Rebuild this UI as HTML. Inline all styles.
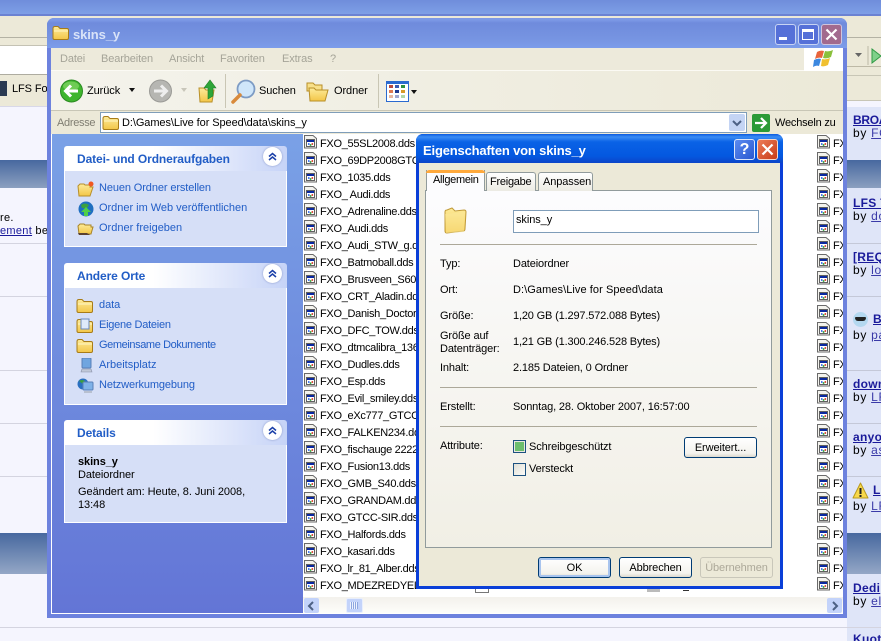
<!DOCTYPE html>
<html><head><meta charset="utf-8"><style>
html,body{margin:0;padding:0}
#p{position:relative;width:881px;height:641px;overflow:hidden;background:#f5f5fe;font:11px/13px "Liberation Sans",sans-serif;color:#000;letter-spacing:-.08px}
.b,.t,svg.i{position:absolute}
.t{white-space:nowrap}
.l{color:#215dc6;letter-spacing:-.05px}
.h{color:#215dc6;font-weight:bold;font-size:12px;letter-spacing:-.1px}
.m{color:#a5a498;letter-spacing:-.12px}
.u{color:#1a1a9a;text-decoration:underline;font-weight:bold;font-size:12px;letter-spacing:.3px}
.y{font-size:12px;letter-spacing:.7px}
.v{color:#3a3aa8;text-decoration:underline}
.d{letter-spacing:-.13px}
.btn{position:absolute;box-sizing:border-box;border:1px solid #003c74;border-radius:3px;background:linear-gradient(#fff,#f4f3ee 80%,#dcd8ce);text-align:center;line-height:20px;letter-spacing:-.1px}
.hd{position:absolute;left:64px;width:223px;height:25px;border-radius:3px 3px 0 0;background:linear-gradient(90deg,#fff 40%,#c6d3f7)}
.bd{position:absolute;left:64px;width:223px;box-sizing:border-box;background:#d6dff7;border:1px solid #fff;border-top:0}
.c{position:absolute;width:19px;height:19px;border-radius:50%;background:#fff;box-shadow:0 0 2px #8796c8}
.col{position:absolute;top:136px;line-height:17px;overflow:hidden;white-space:pre;letter-spacing:-.3px}
</style></head><body><div id="p">
<svg width="0" height="0" style="position:absolute"><defs>
<linearGradient id="fg" x1="0" y1="0" x2="0" y2="1"><stop offset="0" stop-color="#fdeb9a"/><stop offset="1" stop-color="#f3c648"/></linearGradient>
<g id="f"><path d="M.5.5h8.500l3.500 3v9.500H.5z" fill="#f4f3ee" stroke="#6a6a6a"/><rect x="2.500" y="4.500" width="8" height="7" fill="#fff" stroke="#3a3a3a" stroke-width=".8"/><rect x="3" y="5" width="7" height="2" fill="#0a28a0"/><rect x="4" y="8" width="1.500" height="2" fill="#4a7af0"/><rect x="5.800" y="9" width="1.500" height="2" fill="#48b050"/><rect x="7.600" y="8" width="1.500" height="2" fill="#e05040"/></g>
<g id="fo"><path d="M1 3.500Q1 1.500 3 1.500h3l2 2h7q1.500 0 1.500 1.500v8q0 1.500-1.500 1.500H2.500Q1 14.500 1 13z" fill="url(#fg)" stroke="#a87c18"/><path d="M2 5.500h14v1H2z" fill="#fff6c4"/></g>
<g id="ch"><path d="M6 9.500l3.500-3 3.500 3M6 13l3.500-3 3.500 3" fill="none" stroke="#1a3fa8" stroke-width="1.500"/></g>
<g id="col"><use href="#f" y="0"/><use href="#f" y="17"/><use href="#f" y="34"/><use href="#f" y="51"/><use href="#f" y="68"/><use href="#f" y="85"/><use href="#f" y="102"/><use href="#f" y="119"/><use href="#f" y="136"/><use href="#f" y="153"/><use href="#f" y="170"/><use href="#f" y="187"/><use href="#f" y="204"/><use href="#f" y="221"/><use href="#f" y="238"/><use href="#f" y="255"/><use href="#f" y="272"/><use href="#f" y="289"/><use href="#f" y="306"/><use href="#f" y="323"/><use href="#f" y="340"/><use href="#f" y="357"/><use href="#f" y="374"/><use href="#f" y="391"/><use href="#f" y="408"/><use href="#f" y="425"/><use href="#f" y="442"/></g>
</defs></svg>

<!-- background page -->
<div class="b" style="left:0;top:0;width:881px;height:14px;background:linear-gradient(#6f8ddb,#7e9fe6)"></div>
<div class="b" style="left:0;top:14px;width:881px;height:2px;background:#6b82d2"></div>
<div class="b" style="left:0;top:16px;width:881px;height:91px;background:#ece9d8"></div>
<div class="b" style="left:0;top:37px;width:881px;height:1px;background:#b4b2a4"></div>
<div class="b" style="left:0;top:45px;width:47px;height:29px;background:#fff;border-top:1px solid #c4c2b4"></div>
<div class="b" style="left:0;top:74px;width:47px;height:1px;background:#aeaca0"></div>
<div class="b" style="left:847px;top:66px;width:34px;height:1px;background:#bdb9a6"></div>
<div class="b" style="left:847px;top:75px;width:34px;height:1px;background:#c8c6b6"></div>
<div class="b" style="left:847px;top:100px;width:34px;height:7px;background:#f5f5fe;border-top:1px solid #c8c6b6;box-sizing:border-box"></div>
<div class="b" style="left:0;top:106px;width:47px;height:1px;background:#d8d8e8"></div>
<div class="b" style="left:0;top:81px;width:7px;height:15px;background:#2a3a52"></div>
<div class="t" style="left:12px;top:83px">LFS Forum</div>
<div class="b" style="left:847px;top:107px;width:34px;height:534px;background:#dfe5f8"></div>
<div class="b" style="left:0;top:160px;width:881px;height:28px;background:linear-gradient(#47689f,#8ca0c0)"></div>
<div class="b" style="left:0;top:533px;width:881px;height:41px;background:linear-gradient(#47689f,#94a7c6)"></div>
<div class="b" style="left:0;top:243px;width:47px;height:1px;background:#d4d4e0"></div>
<div class="b" style="left:0;top:296px;width:47px;height:1px;background:#d4d4e0"></div>
<div class="b" style="left:0;top:370px;width:47px;height:1px;background:#d4d4e0"></div>
<div class="b" style="left:0;top:423px;width:47px;height:1px;background:#d4d4e0"></div>
<div class="b" style="left:0;top:476px;width:47px;height:1px;background:#d4d4e0"></div>
<div class="b" style="left:0;top:627px;width:881px;height:1px;background:#d4d4e0"></div>
<div class="t" style="left:0;top:212px;letter-spacing:.3px">re.</div>
<div class="t" style="left:0;top:225px;letter-spacing:.3px"><span style="color:#1a1a9a;text-decoration:underline">ement</span> be</div>
<svg class="i" style="left:846px;top:46px" width="35" height="19"><path d="M9 7h7l-3.500 4z" fill="#666"/><path d="M22 0v19" stroke="#bdb9a6"/><path d="M26 3l9 7-9 7z" fill="#7fd08a" stroke="#2f9a45"/></svg>
<div class="t u" style="left:853px;top:114px;letter-spacing:-.3px">BROADCAST</div><div class="t y" style="left:853px;top:127px">by <span class="v">FOX</span></div>
<div class="t u" style="left:853px;top:197px">LFS TV</div><div class="t y" style="left:853px;top:210px">by <span class="v">don</span></div>
<div class="b" style="left:847px;top:243px;width:34px;height:1px;background:#c4c8d8"></div>
<div class="t u" style="left:853px;top:251px">[REQ]</div><div class="t y" style="left:853px;top:264px">by <span class="v">lon</span></div>
<div class="b" style="left:847px;top:296px;width:34px;height:1px;background:#c4c8d8"></div>
<div class="b" style="left:853px;top:312px;width:15px;height:15px;border-radius:50%;background:#b4d8f0"></div><div class="b" style="left:855px;top:317px;width:11px;height:4px;background:#222;border-radius:1px 1px 3px 3px"></div>
<div class="t u" style="left:873px;top:313px">B</div><div class="t y" style="left:853px;top:329px">by <span class="v">pa</span></div>
<div class="b" style="left:847px;top:370px;width:34px;height:1px;background:#c4c8d8"></div>
<div class="t u" style="left:853px;top:378px">down</div><div class="t y" style="left:853px;top:391px">by <span class="v">LF</span></div>
<div class="b" style="left:847px;top:423px;width:34px;height:1px;background:#c4c8d8"></div>
<div class="t u" style="left:853px;top:431px">anyo</div><div class="t y" style="left:853px;top:444px">by <span class="v">as</span></div>
<div class="b" style="left:847px;top:476px;width:34px;height:1px;background:#c4c8d8"></div>
<svg class="i" style="left:852px;top:482px" width="17" height="17"><path d="M8.500 1L16 16H1z" fill="#f8d84a" stroke="#b89a20" stroke-linejoin="round"/><path d="M8.500 6v6M8.500 13v2" stroke="#222" stroke-width="2"/></svg>
<div class="t u" style="left:873px;top:484px">L</div><div class="t y" style="left:853px;top:500px">by <span class="v">LF</span></div>
<div class="t u" style="left:853px;top:582px">Dedi</div><div class="t y" style="left:853px;top:595px">by <span class="v">el</span></div>
<div class="t u" style="left:853px;top:633px">Kuot</div>

<!-- main window -->
<div class="b" style="left:47px;top:18px;width:800px;height:600px;background:#6d82de;border-radius:7px 7px 0 0"></div>
<div class="b" style="left:47px;top:18px;width:800px;height:30px;border-radius:7px 7px 0 0;background:linear-gradient(#7d98e4 0,#7c99e6 2px,#6f8bdc 5px,#7795e2 22px,#7c9cea 30px)"></div>
<svg class="i" style="left:52px;top:25px" width="18" height="16"><use href="#fo"/></svg>
<div class="t" style="left:73px;top:27px;color:#d9e3f8;font-weight:bold;font-size:13px;line-height:16px;letter-spacing:-.1px">skins_y</div>
<div class="b" style="left:775px;top:24px;width:21px;height:21px;box-sizing:border-box;border:1px solid #c8d4f4;border-radius:3px;background:#5570d8"></div>
<div class="b" style="left:779px;top:37px;width:8px;height:3px;background:#fff"></div>
<div class="b" style="left:798px;top:24px;width:21px;height:21px;box-sizing:border-box;border:1px solid #c8d4f4;border-radius:3px;background:#5570d8"></div>
<div class="b" style="left:802px;top:29px;width:12px;height:11px;box-sizing:border-box;border:1px solid #fff;border-top-width:3px"></div>
<div class="b" style="left:821px;top:24px;width:21px;height:21px;box-sizing:border-box;border:1px solid #d0c4dc;border-radius:3px;background:#a26a8e"></div>
<svg class="i" style="left:821px;top:24px" width="21" height="21"><path d="M5.500 5.500l10 10M15.500 5.500l-10 10" stroke="#fff" stroke-width="2.200"/></svg>

<div class="b" style="left:51px;top:48px;width:792px;height:565px;background:#fff"></div>
<!-- menu -->
<div class="b" style="left:51px;top:48px;width:754px;height:22px;background:#edeadb"></div>
<div class="b" style="left:51px;top:70px;width:792px;height:1px;background:#fbfaf4"></div>
<div class="b" style="left:804px;top:48px;width:39px;height:23px;background:#fff"></div>
<svg class="i" style="left:813px;top:49px" width="22" height="20"><path d="M4 3q3-2 7-1l-2 7q-4-1-7 1z" fill="#e8643c"/><path d="M12 2q4 1 8-1l-2 7q-4 2-8 1z" fill="#8ac03c"/><path d="M1 11q4-2 7-1l-2 7q-3-1-6 1z" fill="#3c88e0"/><path d="M9 10q4 1 8-1l-2 7q-4 2-7 1z" fill="#f0c030"/></svg>
<div class="t m" style="left:60px;top:53px">Datei</div>
<div class="t m" style="left:101px;top:53px">Bearbeiten</div>
<div class="t m" style="left:169px;top:53px">Ansicht</div>
<div class="t m" style="left:220px;top:53px">Favoriten</div>
<div class="t m" style="left:282px;top:53px">Extras</div>
<div class="t m" style="left:330px;top:53px">?</div>
<!-- toolbar -->
<div class="b" style="left:51px;top:71px;width:792px;height:39px;background:linear-gradient(90deg,#f4f3ec,#ece9d8)"></div>
<div class="b" style="left:51px;top:110px;width:792px;height:1px;background:#c8c6b6"></div>
<div class="b" style="left:225px;top:74px;width:1px;height:34px;background:#c9c6b4"></div>
<div class="b" style="left:378px;top:74px;width:1px;height:34px;background:#c9c6b4"></div>
<svg class="i" style="left:60px;top:79px" width="24" height="24"><circle cx="11.500" cy="12" r="11" fill="#3fb52e" stroke="#2b8a22"/><ellipse cx="11" cy="7" rx="8" ry="4.500" fill="#8fdc6f" opacity=".6"/><path d="M18 12H6M11 6.500L5.500 12l5.500 5.500" fill="none" stroke="#fff" stroke-width="3"/></svg>
<div class="t" style="left:87px;top:85px">Zurück</div>
<svg class="i" style="left:128px;top:88px" width="8" height="5"><path d="M1 0h6L4 4z" fill="#111"/></svg>
<svg class="i" style="left:149px;top:79px" width="24" height="24"><circle cx="11.500" cy="12" r="11" fill="#b6b6b2" stroke="#9a9a96"/><path d="M5 12h12M12 6.500l5.500 5.500-5.500 5.500" fill="none" stroke="#eee" stroke-width="3"/></svg>
<svg class="i" style="left:180px;top:88px" width="8" height="5"><path d="M1 0h6L4 4z" fill="#c8c6ba"/></svg>
<svg class="i" style="left:198px;top:79px" width="20" height="24"><path d="M1 9h5l2 2h8l-2 12H2z" fill="url(#fg)" stroke="#b88f28"/><path d="M10 20V9H6l6-8 6 8h-3v8z" fill="#2ea638" stroke="#1f7d28" stroke-width=".6"/></svg>
<svg class="i" style="left:231px;top:79px" width="26" height="25"><circle cx="15" cy="10" r="8.500" fill="#cfe6fa" stroke="#7d9bc4" stroke-width="1.800"/><path d="M9 16l-7 7" stroke="#d88a3c" stroke-width="3.500" stroke-linecap="round"/></svg>
<div class="t" style="left:259px;top:85px">Suchen</div>
<svg class="i" style="left:306px;top:80px" width="24" height="22"><path d="M1 3h6l2 2h7v6H1z" fill="#f8e08a" stroke="#b88f28"/><path d="M3 8h5l2 2h12l-3 11H4z" fill="url(#fg)" stroke="#b88f28"/></svg>
<div class="t" style="left:334px;top:85px">Ordner</div>
<div class="b" style="left:386px;top:81px;width:23px;height:21px;box-sizing:border-box;border:1px solid #2a6ad0;border-top-width:3px;background:#fff"></div>
<svg class="i" style="left:389px;top:85px" width="16" height="14"><rect x="0" y="0" width="4" height="3" fill="#b84a40"/><rect x="6" y="0" width="4" height="3" fill="#3a5ab0"/><rect x="12" y="0" width="4" height="3" fill="#2e9040"/><rect x="0" y="5" width="4" height="3" fill="#e07a50"/><rect x="6" y="5" width="4" height="3" fill="#1f3a90"/><rect x="12" y="5" width="4" height="3" fill="#d89a28"/><rect x="0" y="10" width="4" height="3" fill="#e8b8a0"/><rect x="6" y="10" width="4" height="3" fill="#a0a8d0"/><rect x="12" y="10" width="4" height="3" fill="#b0d8a8"/></svg>
<svg class="i" style="left:411px;top:90px" width="7" height="5"><path d="M0 0h6L3 4z" fill="#111"/></svg>
<!-- address -->
<div class="b" style="left:51px;top:111px;width:792px;height:23px;background:#ece9d8"></div>
<div class="t" style="left:57px;top:117px;color:#807e72;letter-spacing:-.3px">Adresse</div>
<div class="b" style="left:100px;top:112px;width:647px;height:21px;box-sizing:border-box;background:#fff;border:1px solid #7f9db9"></div>
<svg class="i" style="left:102px;top:115px" width="18" height="16"><use href="#fo"/></svg>
<div class="t" style="left:122px;top:117px">D:\Games\Live for Speed\data\skins_y</div>
<div class="b" style="left:729px;top:114px;width:16px;height:17px;background:#c4d4f4;border-radius:2px"></div>
<svg class="i" style="left:732px;top:120px" width="10" height="7"><path d="M1 1l4 4 4-4" fill="none" stroke="#4d6185" stroke-width="2"/></svg>
<svg class="i" style="left:752px;top:114px" width="19" height="18"><rect width="18" height="18" rx="2" fill="#2b9a36"/><path d="M3 9h11M9 4l5 5-5 5" fill="none" stroke="#fff" stroke-width="2.200"/></svg>
<div class="t" style="left:775px;top:117px;letter-spacing:-.2px">Wechseln zu</div>
<!-- sidebar -->
<div class="b" style="left:52px;top:134px;width:251px;height:479px;background:linear-gradient(#7aa1e6,#6375d6)"></div>
<div class="hd" style="top:146px"></div><div class="t h" style="left:77px;top:153px">Datei- und Ordneraufgaben</div>
<div class="c" style="left:263px;top:147px"></div><svg class="i" style="left:263px;top:147px" width="19" height="19"><use href="#ch"/></svg>
<div class="bd" style="top:171px;height:76px"></div>
<svg class="i" style="left:77px;top:181px" width="17" height="16"><path d="M1 5l2-2h4l1 1h6l-1 2 3 0-3 9H2z" fill="url(#fg)" stroke="#b88f28"/><circle cx="14" cy="3" r="2.500" fill="#f05820"/></svg>
<div class="t l" style="left:99px;top:182px;letter-spacing:-.11px">Neuen Ordner erstellen</div>
<svg class="i" style="left:78px;top:201px" width="16" height="16"><circle cx="8" cy="8" r="7.500" fill="#1f6fc0"/><path d="M3 4q4-3 8 0l-2 3H4z" fill="#3ca040"/><path d="M8 6l5 5h-3v4H6v-4H3z" fill="#4fd048"/></svg>
<div class="t l" style="left:99px;top:202px;letter-spacing:-.02px">Ordner im Web veröffentlichen</div>
<svg class="i" style="left:77px;top:221px" width="17" height="16"><path d="M1 5l2-2h4l1 1h6v2l2 0-2 7H2z" fill="url(#fg)" stroke="#a88428"/><path d="M1 12h9l3 2H2z" fill="#5a4030"/></svg>
<div class="t l" style="left:99px;top:222px;letter-spacing:0">Ordner freigeben</div>

<div class="hd" style="top:263px"></div><div class="t h" style="left:77px;top:270px">Andere Orte</div>
<div class="c" style="left:263px;top:264px"></div><svg class="i" style="left:263px;top:264px" width="19" height="19"><use href="#ch"/></svg>
<div class="bd" style="top:288px;height:117px"></div>
<svg class="i" style="left:76px;top:298px" width="18" height="16"><use href="#fo"/></svg>
<div class="t l" style="left:99px;top:299px">data</div>
<svg class="i" style="left:76px;top:318px" width="18" height="16"><use href="#fo"/><rect x="5" y="1" width="8" height="10" fill="#dfeafa" stroke="#6a88bc"/></svg>
<div class="t l" style="left:99px;top:319px;letter-spacing:-.25px">Eigene Dateien</div>
<svg class="i" style="left:76px;top:338px" width="18" height="16"><use href="#fo"/></svg>
<div class="t l" style="left:99px;top:339px;letter-spacing:-.4px">Gemeinsame Dokumente</div>
<svg class="i" style="left:79px;top:358px" width="15" height="16"><rect x="3" y="0" width="9" height="10" rx="1" fill="#6fa5e0" stroke="#5a80b8"/><path d="M3 11h9l1 3H2z" fill="#c0c8d8" stroke="#8890a8" stroke-width=".6"/></svg>
<div class="t l" style="left:99px;top:359px;letter-spacing:0">Arbeitsplatz</div>
<svg class="i" style="left:77px;top:378px" width="17" height="16"><circle cx="6" cy="6" r="5.500" fill="#2a70c0"/><path d="M2 3q3-2 6 0L6 6z" fill="#3ca040"/><rect x="6" y="4" width="10" height="8" rx="1" fill="#7fb2e8" stroke="#5a80b8"/><rect x="7" y="13" width="8" height="2" fill="#b8c0d0"/></svg>
<div class="t l" style="left:99px;top:379px;letter-spacing:-.12px">Netzwerkumgebung</div>

<div class="hd" style="top:420px"></div><div class="t h" style="left:77px;top:427px">Details</div>
<div class="c" style="left:263px;top:421px"></div><svg class="i" style="left:263px;top:421px" width="19" height="19"><use href="#ch"/></svg>
<div class="bd" style="top:445px;height:78px"></div>
<div class="t" style="left:78px;top:456px;font-weight:bold">skins_y</div>
<div class="t" style="left:78px;top:469px">Dateiordner</div>
<div class="t" style="left:78px;top:486px;letter-spacing:-.05px">Geändert am: Heute, 8. Juni 2008,</div>
<div class="t" style="left:78px;top:499px">13:48</div>

<!-- file list -->
<svg class="i" style="left:304px;top:135px" width="540" height="462"><use href="#col"/><use href="#col" x="513"/></svg>
<div class="col" style="left:320px;width:97px">FXO_55SL2008.dds
FXO_69DP2008GTC
FXO_1035.dds
FXO_ Audi.dds
FXO_Adrenaline.dds
FXO_Audi.dds
FXO_Audi_STW_g.dds
FXO_Batmoball.dds
FXO_Brusveen_S60
FXO_CRT_Aladin.dds
FXO_Danish_Doctor
FXO_DFC_TOW.dds
FXO_dtmcalibra_136
FXO_Dudles.dds
FXO_Esp.dds
FXO_Evil_smiley.dds
FXO_eXc777_GTCC
FXO_FALKEN234.dds
FXO_fischauge 2222
FXO_Fusion13.dds
FXO_GMB_S40.dds
FXO_GRANDAM.dds
FXO_GTCC-SIR.dds
FXO_Halfords.dds
FXO_kasari.dds
FXO_lr_81_Alber.dds
FXO_MDEZREDYELL</div>
<div class="col" style="left:833px;width:10px">FXO
FXO
FXO
FXO
FXO
FXO
FXO
FXO
FXO
FXO
FXO
FXO
FXO
FXO
FXO
FXO
FXO
FXO
FXO
FXO
FXO
FXO
FXO
FXO
FXO
FXO
FXO</div>
<div class="b" style="left:475px;top:586px;width:14px;height:7px;background:#fff;border:1px solid #777;border-top:0;box-sizing:border-box"></div>
<div class="b" style="left:647px;top:589px;width:13px;height:3px;background:#bbb"></div>
<div class="b" style="left:683px;top:590px;width:6px;height:1px;background:#333"></div>
<!-- scrollbar -->
<div class="b" style="left:303px;top:597px;width:540px;height:17px;background:linear-gradient(#f3f1ec,#fefefb)"></div>
<div class="b" style="left:304px;top:598px;width:15px;height:15px;background:#c3d3fa;border-radius:2px"></div>
<svg class="i" style="left:307px;top:601px" width="9" height="10"><path d="M6 1L2 5l4 4" fill="none" stroke="#4d6185" stroke-width="2"/></svg>
<div class="b" style="left:346px;top:598px;width:17px;height:15px;background:#c3d3fa;border-radius:2px;box-sizing:border-box;border:1px solid #e8eefc"></div>
<div class="b" style="left:350px;top:602px;width:8px;height:7px;background:repeating-linear-gradient(90deg,#eef3fe 0 1px,#8ea6e0 1px 2px)"></div>
<div class="b" style="left:827px;top:598px;width:15px;height:15px;background:#c3d3fa;border-radius:2px"></div>
<svg class="i" style="left:830px;top:601px" width="9" height="10"><path d="M3 1l4 4-4 4" fill="none" stroke="#4d6185" stroke-width="2"/></svg>
<div class="b" style="left:51px;top:613px;width:792px;height:1px;background:#fff"></div>

<!-- dialog -->
<div class="b" style="left:416px;top:134px;width:367px;height:455px;background:#0a3fd8;border-radius:7px 7px 0 0"></div>
<div class="b" style="left:416px;top:134px;width:367px;height:29px;border-radius:7px 7px 0 0;background:linear-gradient(#0a5ae0 0,#3a8cf4 3px,#0a62e6 8px,#0458e0 22px,#0b44c8 29px)"></div>
<div class="t" style="left:423px;top:143px;color:#fff;font-weight:bold;font-size:13px;line-height:16px;letter-spacing:-.17px">Eigenschaften von skins_y</div>
<div class="b" style="left:734px;top:139px;width:21px;height:21px;box-sizing:border-box;border:1px solid #dce6fb;border-radius:3px;background:linear-gradient(135deg,#5b8bf0,#2a58d0)"></div>
<div class="t" style="left:734px;top:140px;width:21px;text-align:center;color:#fff;font-weight:bold;font-size:16px;line-height:19px">?</div>
<div class="b" style="left:757px;top:139px;width:21px;height:21px;box-sizing:border-box;border:1px solid #f4d8cc;border-radius:3px;background:linear-gradient(135deg,#ec7c58,#c83c18)"></div>
<svg class="i" style="left:757px;top:139px" width="21" height="21"><path d="M5.500 5.500l10 10M15.500 5.500l-10 10" stroke="#fff" stroke-width="2.200"/></svg>
<div class="b" style="left:419px;top:163px;width:361px;height:423px;background:#ece9d8"></div>
<!-- tab panel -->
<div class="b" style="left:425px;top:190px;width:347px;height:358px;box-sizing:border-box;border:1px solid #919b9c;background:linear-gradient(#fcfcfe,#f1efe5)"></div>
<div class="b" style="left:486px;top:172px;width:50px;height:19px;box-sizing:border-box;border:1px solid #919b9c;border-bottom:0;border-radius:3px 3px 0 0;background:linear-gradient(#fff,#ecebe3)"></div>
<div class="t" style="left:490px;top:176px;letter-spacing:-.25px">Freigabe</div>
<div class="b" style="left:538px;top:172px;width:55px;height:19px;box-sizing:border-box;border:1px solid #919b9c;border-bottom:0;border-radius:3px 3px 0 0;background:linear-gradient(#fff,#ecebe3)"></div>
<div class="t" style="left:543px;top:176px;letter-spacing:-.1px">Anpassen</div>
<div class="b" style="left:426px;top:170px;width:59px;height:21px;box-sizing:border-box;border:1px solid #919b9c;border-top:0;border-bottom:0;background:#fcfcfe"></div>
<div class="b" style="left:426px;top:170px;width:59px;height:3px;background:#ffa93c;border-radius:3px 3px 0 0"></div>
<div class="t" style="left:433px;top:174px;letter-spacing:-.3px">Allgemein</div>
<svg class="i" style="left:443px;top:206px" width="26" height="29"><path d="M2 6q0-2 2-2l5-2 3 3 9-1q2 0 2 2l-1 17q0 2-2 2L4 27q-2 0-2-2z" fill="url(#fg)" stroke="#c09a38"/><path d="M2 8l20-2-1 20L3 27z" fill="#fce99e" opacity=".5"/></svg>
<div class="b" style="left:513px;top:210px;width:246px;height:23px;box-sizing:border-box;background:#fff;border:1px solid #7f9db9"></div>
<div class="t" style="left:516px;top:214px">skins_y</div>
<div class="b" style="left:440px;top:244px;width:317px;height:1px;background:#aca899"></div>
<div class="t d" style="left:440px;top:258px">Typ:</div><div class="t d" style="left:513px;top:258px">Dateiordner</div>
<div class="t d" style="left:440px;top:284px">Ort:</div><div class="t" style="left:513px;top:284px;letter-spacing:.07px">D:\Games\Live for Speed\data</div>
<div class="t d" style="left:440px;top:310px">Größe:</div><div class="t" style="left:513px;top:310px;letter-spacing:-.16px">1,20 GB (1.297.572.088 Bytes)</div>
<div class="t d" style="left:440px;top:330px">Größe auf</div><div class="t d" style="left:440px;top:343px">Datenträger:</div><div class="t" style="left:513px;top:336px;letter-spacing:-.16px">1,21 GB (1.300.246.528 Bytes)</div>
<div class="t d" style="left:440px;top:362px">Inhalt:</div><div class="t d" style="left:513px;top:362px">2.185 Dateien, 0 Ordner</div>
<div class="b" style="left:440px;top:387px;width:317px;height:1px;background:#aca899"></div>
<div class="t d" style="left:440px;top:401px">Erstellt:</div><div class="t d" style="left:513px;top:401px">Sonntag, 28. Oktober 2007, 16:57:00</div>
<div class="b" style="left:440px;top:426px;width:317px;height:1px;background:#aca899"></div>
<div class="t d" style="left:440px;top:440px">Attribute:</div>
<div class="b" style="left:513px;top:440px;width:13px;height:13px;box-sizing:border-box;border:1px solid #1c5180;background:#e8e8e0"></div>
<div class="b" style="left:515px;top:442px;width:9px;height:9px;background:#6cbf6e"></div>
<div class="t d" style="left:529px;top:441px">Schreibgeschützt</div>
<div class="b" style="left:513px;top:463px;width:13px;height:13px;box-sizing:border-box;border:1px solid #1c5180;background:linear-gradient(135deg,#e0dfd6,#fbfbf8)"></div>
<div class="t d" style="left:529px;top:463px">Versteckt</div>
<div class="btn" style="left:684px;top:437px;width:73px;height:21px">Erweitert...</div>
<div class="btn" style="left:538px;top:557px;width:73px;height:21px;box-shadow:inset 0 0 0 2px #a8c4ee">OK</div>
<div class="btn" style="left:619px;top:557px;width:73px;height:21px">Abbrechen</div>
<div class="btn" style="left:700px;top:557px;width:73px;height:21px;border-color:#c9c7ba;background:#ece9d8;color:#aca899">Übernehmen</div>
</div></body></html>
